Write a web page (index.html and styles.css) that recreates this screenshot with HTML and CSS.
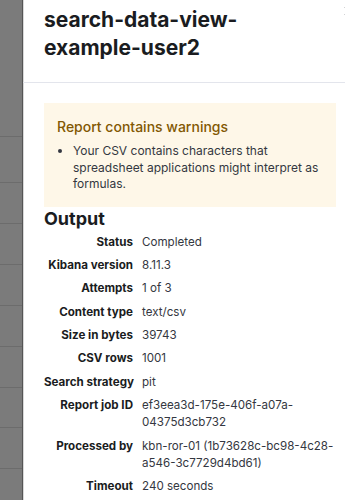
FILE: index.html
```html
<!DOCTYPE html>
<html>
<head>
    <title>Report info</title>
    <link rel="stylesheet" href="styles.css">
</head>
<body>
    <div class="backdrop">
        <div class="backdrop-row first"></div>
        <div class="backdrop-row tall"></div>
        <div class="backdrop-row"></div>
        <div class="backdrop-row"></div>
        <div class="backdrop-row"></div>
        <div class="backdrop-row"></div>
        <div class="backdrop-row"></div>
        <div class="backdrop-row short"></div>
        <div class="backdrop-row"></div>
    </div>
    <div class="flyout">
        <button class="close-btn" aria-label="Close">
            <svg width="12" height="12" viewBox="0 0 12 12"><path d="M2 2l8 8M10 2l-8 8" stroke="#343741" stroke-width="1.4" fill="none"/></svg>
        </button>
        <div class="flyout-header">
            <h2>search-data-view-example-user2</h2>
        </div>
        <div class="flyout-body">
            <div class="callout">
                <p class="callout-title">Report contains warnings</p>
                <ul>
                    <li>Your CSV contains characters that spreadsheet applications might interpret as formulas.</li>
                </ul>
            </div>
            <h3 class="section-title">Output</h3>
            <dl class="info-list">
                <dt>Status</dt>
                <dd>Completed</dd>
                <dt>Kibana version</dt>
                <dd>8.11.3</dd>
                <dt>Attempts</dt>
                <dd>1 of 3</dd>
                <dt>Content type</dt>
                <dd>text/csv</dd>
                <dt>Size in bytes</dt>
                <dd>39743</dd>
                <dt>CSV rows</dt>
                <dd>1001</dd>
                <dt>Search strategy</dt>
                <dd>pit</dd>
                <dt>Report job ID</dt>
                <dd>ef3eea3d-175e-406f-a07a-04375d3cb732</dd>
                <dt>Processed by</dt>
                <dd>kbn-ror-01 (1b73628c-bc98-4c28-a546-3c7729d4bd61)</dd>
                <dt>Timeout</dt>
                <dd>240 seconds</dd>
            </dl>
        </div>
    </div>
</body>
</html>
```

FILE: styles.css
```css
:root {
    --text-dark: #1a1c21;
    --text-body: #343741;
    --warning-bg: #fef7e8;
    --warning-text: #825803;
    --border-grey: #e3e5ec;
    --overlay: #7b7b7b;
}

* {
    margin: 0;
    padding: 0;
    box-sizing: border-box;
    font-family: 'Inter', 'Liberation Sans', sans-serif;
}

body {
    display: flex;
    height: 500px;
    overflow: hidden;
    background: white;
}

.backdrop {
    width: 22px;
    flex-shrink: 0;
    background: var(--overlay);
    display: flex;
    flex-direction: column;
}

.backdrop-row {
    height: 41px;
    border-bottom: 1px solid #6c6c6c;
}

.backdrop-row.first {
    height: 137px;
}

.backdrop-row.tall {
    height: 46px;
}

.backdrop-row.short {
    height: 40px;
}

.flyout {
    flex: 1;
    position: relative;
    background: white;
    border-left: 1px solid #555;
    box-shadow: inset 1px 0 0 #d8d8d8;
}

.close-btn {
    position: absolute;
    top: 4px;
    right: -10px;
    background: none;
    border: none;
    padding: 0;
    width: 12px;
    height: 12px;
}

.flyout-header {
    padding: 6px 60px 0 21px;
    border-bottom: 1px solid var(--border-grey);
    height: 83px;
}

.flyout-header h2 {
    font-size: 21px;
    line-height: 28px;
    font-weight: 700;
    color: var(--text-dark);
}

.flyout-body {
    padding: 20px 9px 0 21px;
}

.callout {
    background: var(--warning-bg);
    padding: 14px 13px 14px 13px;
}

.callout-title {
    font-size: 14px;
    line-height: 20px;
    font-weight: 500;
    color: var(--warning-text);
    margin-bottom: 6px;
}

.callout ul {
    padding-left: 16px;
    font-size: 12px;
    line-height: 16.5px;
    color: var(--text-body);
}

.section-title {
    font-size: 18px;
    line-height: 24px;
    font-weight: 700;
    color: var(--text-dark);
    margin-bottom: 3px;
}

.info-list {
    display: grid;
    grid-template-columns: 89px 1fr;
    column-gap: 9px;
    row-gap: 6.4px;
    font-size: 11.6px;
    line-height: 17px;
    color: var(--text-body);
}

.info-list dt {
    text-align: right;
    white-space: nowrap;
    font-weight: 700;
    color: var(--text-dark);
}

.info-list dd {
    overflow-wrap: break-word;
}
```
